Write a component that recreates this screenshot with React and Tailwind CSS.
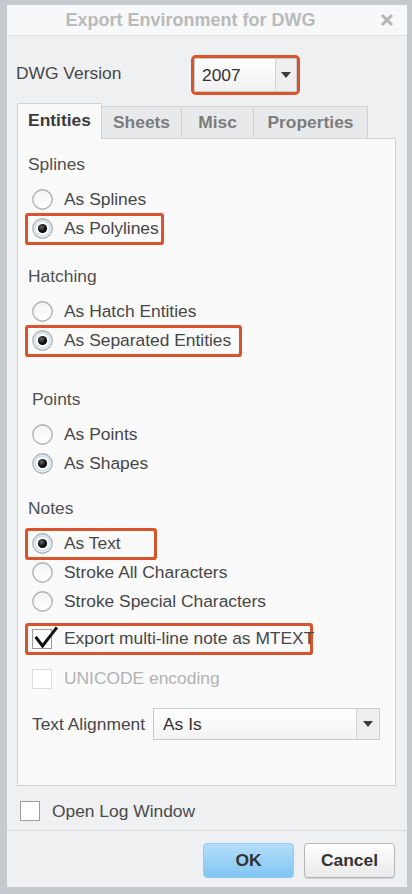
import React from 'react';

function Radio({ checked }) {
  return (
    <svg width="21" height="21" viewBox="0 0 21 21" className="shrink-0">
      <defs>
        <linearGradient id="rfill" x1="0" y1="0" x2="0" y2="1">
          <stop offset="0" stopColor="#f3f3f3" />
          <stop offset="1" stopColor="#ffffff" />
        </linearGradient>
        <radialGradient id="rdot" cx="0.4" cy="0.35" r="0.7">
          <stop offset="0" stopColor="#6a6a6a" />
          <stop offset="0.5" stopColor="#1e1e1e" />
          <stop offset="1" stopColor="#000000" />
        </radialGradient>
      </defs>
      <circle cx="10.5" cy="10.5" r="9.7" fill="url(#rfill)" stroke="#b3b3b3" strokeWidth="1.4" />
      {checked && (
        <>
          <circle cx="10.5" cy="10.5" r="7.4" fill="#ffffff" stroke="#c9e3f4" strokeWidth="1.6" />
          <circle cx="10.5" cy="10.5" r="4.6" fill="url(#rdot)" />
        </>
      )}
    </svg>
  );
}

function Check({ checked, disabled }) {
  return (
    <div
      className={`relative w-[20px] h-[20px] shrink-0 border bg-white ${disabled ? 'border-[#dedede]' : 'border-[#9c9c9c]'}`}
    >
      {checked && (
        <svg width="28" height="26" viewBox="0 0 28 26" className="absolute left-[-1px] top-[-5px]">
          <path d="M4.5 13 L10.5 21 L24 3.5" fill="none" stroke="#111" strokeWidth="3" strokeLinecap="square" strokeLinejoin="miter" />
        </svg>
      )}
    </div>
  );
}

function Arrow() {
  return (
    <svg width="10" height="6" viewBox="0 0 10 6">
      <path d="M0 0 H10 L5 6 Z" fill="#3d3d3d" />
    </svg>
  );
}

function Option({ label, checked, hl, w }) {
  return (
    <div className="h-[29px] flex items-center">
      <div
        className={`h-[26px] flex items-center pl-[4px] gap-[11px] ${hl ? 'ring-[3px] ring-[#d8542c] rounded-[1px]' : ''}`}
        style={hl ? { width: w } : undefined}
      >
        <Radio checked={checked} />
        <span className="whitespace-nowrap">{label}</span>
      </div>
    </div>
  );
}

function SectionLabel({ children, className = '' }) {
  return <div className={`h-[30px] flex items-center text-[#505050] ${className}`}>{children}</div>;
}

export default function App() {
  return (
    <div className="w-[412px] h-[894px] bg-[#c6cacf] pt-[5px] pl-[7px] pr-[5px] font-['Liberation_Sans',Arial,sans-serif] text-[17.4px] text-[#474747]">
      <div className="w-[400px] bg-[#eff0f2]">
        {/* title bar */}
        <div className="h-[31px] flex items-center bg-[#f7f8f9] border-b border-[#dde1e5]">
          <div className="flex-1 text-center font-bold text-[18px] text-[#bababa]">Export Environment for DWG</div>
          <div className="w-[26px] mr-[7px] flex justify-center">
            <svg width="14" height="14" viewBox="0 0 14 14">
              <path d="M2 2 L12 12 M12 2 L2 12" stroke="#b6b6b6" strokeWidth="3" />
            </svg>
          </div>
        </div>

        {/* DWG version */}
        <div className="mt-[22px] flex items-center pl-[9px]">
          <div className="w-[178px] pb-[4px]">DWG Version</div>
          <div className="w-[103px] h-[34px] flex ring-[3px] ring-[#d8542c] rounded-[2px] border border-[#cacaca] bg-gradient-to-b from-[#ffffff] to-[#f1f1f1]">
            <div className="flex-1 flex items-center pl-[7px] text-[#333]">2007</div>
            <div className="w-[21px] flex items-center justify-center border-l border-[#d4d4d4] bg-[#eeeeee]">
              <Arrow />
            </div>
          </div>
        </div>

        {/* tabs */}
        <div className="mt-[11px] ml-[10px] flex items-end">
          <div className="relative z-10 -mb-px w-[85px] h-[36px] flex items-center justify-center bg-[#fafafa] border border-b-0 border-[#cfd3d7] rounded-t-[2px] font-bold text-[#3a3a3a] pb-[2px]">
            Entities
          </div>
          <div className="w-[80px] h-[32px] flex items-center justify-center bg-[#e8e9eb] border-t border-r border-[#cfd3d7] font-bold text-[#7c7c7c]">
            Sheets
          </div>
          <div className="w-[72px] h-[32px] flex items-center justify-center bg-[#e8e9eb] border-t border-r border-[#cfd3d7] font-bold text-[#7c7c7c]">
            Misc
          </div>
          <div className="w-[114px] h-[32px] flex items-center justify-center bg-[#e8e9eb] border-t border-r border-[#cfd3d7] font-bold text-[#7c7c7c]">
            Properties
          </div>
        </div>

        {/* panel */}
        <div className="ml-[10px] w-[379px] bg-[#fafafa] border border-[#cfd3d7] pt-[10px] pb-[45px] pl-[10px]">
          <SectionLabel>Splines</SectionLabel>
          <div className="mt-[6px]">
            <Option label="As Splines" />
            <Option label="As Polylines" checked hl w={133} />
          </div>

          <SectionLabel className="mt-[18px]">Hatching</SectionLabel>
          <div className="mt-[6px]">
            <Option label="As Hatch Entities" />
            <Option label="As Separated Entities" checked hl w={211} />
          </div>

          <SectionLabel className="mt-[29px] pl-[4px]">Points</SectionLabel>
          <div className="mt-[6px]">
            <Option label="As Points" />
            <Option label="As Shapes" checked />
          </div>

          <SectionLabel className="mt-[15px]">Notes</SectionLabel>
          <div className="mt-[6px]">
            <Option label="As Text" checked hl w={126} />
            <Option label="Stroke All Characters" />
            <Option label="Stroke Special Characters" />
          </div>

          <div className="mt-[8px] h-[29px] flex items-center">
            <div className="h-[26px] w-[282px] flex items-center pl-[4px] gap-[12px] ring-[3px] ring-[#d8542c] rounded-[1px]">
              <Check checked />
              <span className="whitespace-nowrap">Export multi-line note as MTEXT</span>
            </div>
          </div>

          <div className="mt-[11px] h-[29px] flex items-center pl-[4px] gap-[12px]">
            <Check disabled />
            <span className="text-[#b2b2b2]">UNICODE encoding</span>
          </div>

          <div className="mt-[15px] h-[32px] flex items-center pl-[4px]">
            <div className="w-[121px] text-[#474747] whitespace-nowrap">Text Alignment</div>
            <div className="w-[227px] h-[32px] flex border border-[#cacaca] bg-gradient-to-b from-[#ffffff] to-[#f3f3f3]">
              <div className="flex-1 flex items-center pl-[9px] text-[#333]">As Is</div>
              <div className="w-[23px] flex items-center justify-center border-l border-[#d4d4d4] bg-[#eeeeee]">
                <Arrow />
              </div>
            </div>
          </div>
        </div>

        {/* open log */}
        <div className="mt-[15px] h-[20px] flex items-center pl-[13px] gap-[12px]">
          <Check />
          <span className="text-[#4a4a4a]">Open Log Window</span>
        </div>

        {/* buttons */}
        <div className="mt-[9px] border-t border-[#dcdfe3] pt-[12px] pb-[9px] flex justify-end pr-[12px] gap-[10px]">
          <button className="w-[91px] h-[35px] rounded-[4px] border border-[#8fcdf2] bg-gradient-to-b from-[#b4def9] to-[#80c6f3] font-bold text-[#333]">
            OK
          </button>
          <button className="w-[91px] h-[35px] rounded-[4px] border border-[#b5b5b5] bg-gradient-to-b from-[#ffffff] to-[#e9e9e9] font-bold text-[#333] shadow-[0_1px_1px_rgba(0,0,0,0.15)]">
            Cancel
          </button>
        </div>
      </div>
    </div>
  );
}
